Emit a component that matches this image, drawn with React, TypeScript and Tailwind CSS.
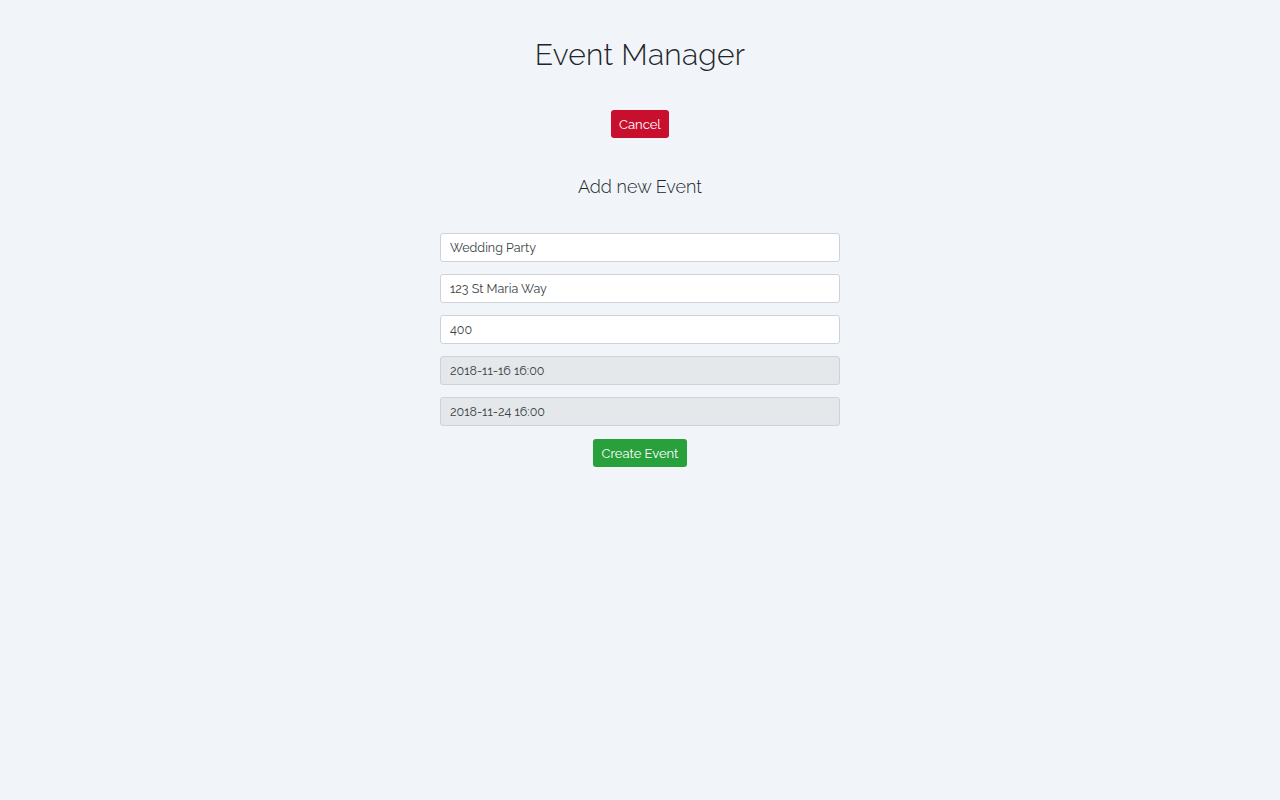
export default function App() {
  const fields = [
    { value: "Wedding Party", disabled: false },
    { value: "123 St Maria Way", disabled: false },
    { value: "400", disabled: false },
    { value: "2018-11-16 16:00", disabled: true },
    { value: "2018-11-24 16:00", disabled: true },
  ];

  return (
    <div
      className="min-h-[800px] w-full bg-[#f1f5f9] text-[#212529] flex flex-col items-center"
      style={{ fontFamily: "Raleway, Lato, 'Open Sans', sans-serif" }}
    >
      <h1 className="mt-[36px] text-[30px] leading-[38px] font-light tracking-[0.3px]">
        Event Manager
      </h1>

      <button className="mt-[36px] h-[28px] px-[8px] rounded-[3px] bg-[#c8102e] text-white text-[13px] leading-none">
        Cancel
      </button>

      <h2 className="mt-[37px] text-[18px] leading-[24px] font-light">
        Add new Event
      </h2>

      <form className="mt-[34px] w-[400px] flex flex-col gap-[12px]">
        {fields.map((f) => (
          <input
            key={f.value}
            readOnly
            disabled={f.disabled}
            value={f.value}
            className={
              "h-[29px] w-full rounded-[3px] border border-[#cdd3d8] px-[9px] text-[12.5px] text-[#3a3f44] outline-none " +
              (f.disabled ? "bg-[#e4e8eb]" : "bg-white")
            }
          />
        ))}
      </form>

      <button className="mt-[13px] h-[28px] px-[9px] rounded-[3px] bg-[#28a03c] text-white text-[13px] leading-none">
        Create Event
      </button>
    </div>
  );
}
